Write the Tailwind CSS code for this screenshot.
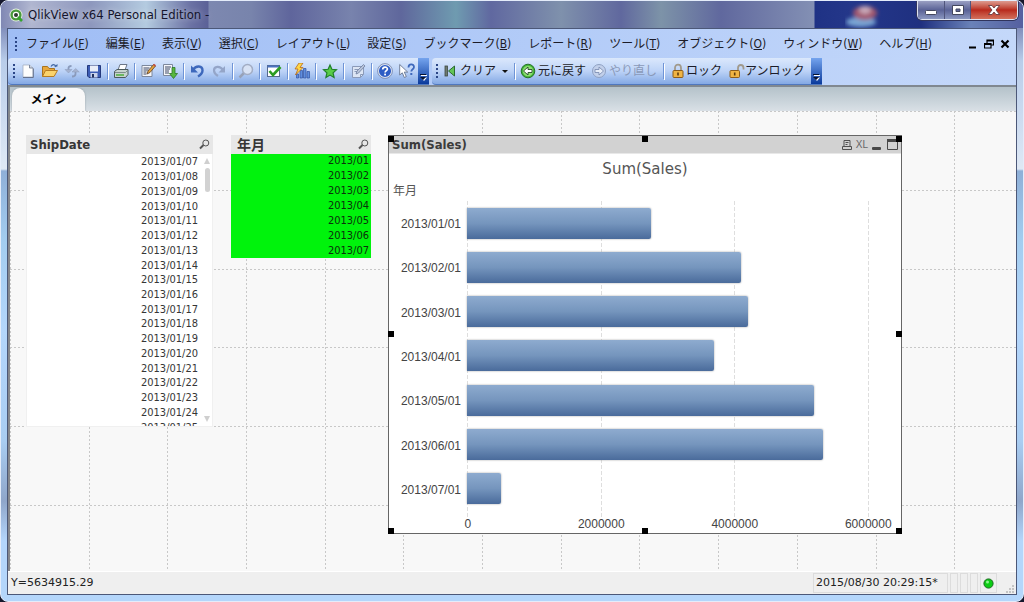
<!DOCTYPE html>
<html lang="ja">
<head>
<meta charset="utf-8">
<title>QlikView x64 Personal Edition</title>
<script src="https://cdn.jsdelivr.net/npm/@tailwindcss/browser@4"></script>
</head>
<body class="h-screen overflow-hidden bg-[#15172c] font-['Noto_Sans','Noto_Sans_CJK_JP',sans-serif] text-xs text-[#1c1c28] select-none">
<div class="flex h-screen flex-col overflow-hidden rounded-lg border border-[#e4ecfa] bg-[linear-gradient(180deg,#6870a8_0,#8390bd_28px,#b9cdea_60px,#d8e4f4_150px,#dfe8f4_168px,#8fb0d8_170px,#a3cdf0_240px,#b4d6fb_330px,#a9cdf2_440px,#8fa6ca_500px,#b4d6fb_540px)] px-[6px] pb-[6px]">

  <header class="-mx-[6px] flex h-[27px] shrink-0 items-start bg-[linear-gradient(90deg,#8088b4_0,#b0b6d0_30px,#8d97bd_90px,#b4cbe0_145px,#6b72a4_190px,#5b6197_207px,#7d88b0_208px,#7884ac_250px,#5f659c_290px,#7883ad_350px,#5f679c_400px,#6f9bb0_455px,#6068a0_490px,#7f91ac_560px,#60689e_620px,#7d93a8_660px,#60689e_720px,#8390b4_813px,#1f3285_814px,#24378a_850px,#1f3080_920px,#6a82b8_970px,#5560a0_100%)]">
    <div class="flex h-[27px] flex-1 items-center gap-[5px] pl-2">
      <svg class="size-[14px]" viewBox="0 0 14 14"><circle cx="7" cy="7" r="6.5" fill="#e8efe6"/><circle cx="7" cy="7" r="4.4" fill="#fff" stroke="#4a9a3c" stroke-width="2.4"/><circle cx="7" cy="7" r="2" fill="#2d3a30"/><path d="M9 9l4 4" stroke="#35a42c" stroke-width="2.6"/></svg>
      <h1 class="pt-px font-['DejaVu_Sans_Condensed','DejaVu_Sans',sans-serif] text-[13px] text-[#15152c] [text-shadow:0_0_6px_#ffffff99]">QlikView x64 Personal Edition -</h1>
    </div>
    <svg class="mr-8 h-[27px] w-10" viewBox="0 0 40 27"><defs><filter id="soft"><feGaussianBlur stdDeviation="2"/></filter></defs><g filter="url(#soft)"><ellipse cx="16" cy="21" rx="15" ry="5" fill="#7aa6d4"/><ellipse cx="20" cy="12" rx="12" ry="7" fill="#a0566e"/><ellipse cx="20" cy="9" rx="6" ry="4" fill="#c8a8b8"/></g></svg>
    <div class="mr-[5px] flex h-[19px] overflow-hidden rounded-b-[5px] border border-t-0 border-[#dfe4f0] shadow-[0_0_0_1px_#30345c]">
      <button aria-label="最小化" class="flex w-[27px] items-center justify-center border-r border-[#50557c] bg-linear-to-b from-[#9a9fc2] via-[#5a6296] via-50% to-[#8c98c0]"><svg class="h-[14px] w-[14px]" viewBox="0 0 14 14"><rect x="1.500" y="7.500" width="11" height="4" rx="1" fill="#fff" stroke="#44485e"/></svg></button>
      <button aria-label="最大化" class="flex w-[26px] items-center justify-center border-r border-[#50557c] bg-linear-to-b from-[#9a9fc2] via-[#5a6296] via-50% to-[#8c98c0]"><svg class="h-[12px] w-[14px]" viewBox="0 0 14 12"><path fill-rule="evenodd" d="M1.500 1.500h11v9h-11zM5 5v2.500h4V5z" fill="#fff" stroke="#44485e"/></svg></button>
      <button aria-label="閉じる" class="flex w-[46px] items-center justify-center bg-linear-to-b from-[#dc9a90] via-[#b8281c] via-50% to-[#d2705c]"><svg class="h-[12px] w-[14px]" viewBox="0 0 14 12"><path d="M1.500 1.500h3.500l2 2.500 2-2.500h3.500L9 6l3.500 4.500H9L7 8l-2 2.500H1.500L5 6z" fill="#fff" stroke="#5a3038" stroke-width=".8"/></svg></button>
    </div>
  </header>

  <main class="flex min-h-0 flex-1 flex-col border border-[#4c5878] bg-[#f8f8f8]">
    <nav class="flex h-[29px] shrink-0 items-center bg-linear-to-r from-[#9fbdf5] to-[#c4d8fa] pl-[7px]" aria-label="メニュー">
      <svg class="mr-[9px] h-4 w-[2px]" viewBox="0 0 2 16"><path d="M1 1v15" stroke="#2b4687" stroke-width="2" stroke-dasharray="2 2"/></svg>
      <div class="flex flex-1 gap-[17px] font-['DejaVu_Sans_Condensed','Noto_Sans_CJK_JP',sans-serif] whitespace-nowrap">
        <button>ファイル(<u>F</u>)</button><button>編集(<u>E</u>)</button><button>表示(<u>V</u>)</button><button>選択(<u>C</u>)</button><button>レイアウト(<u>L</u>)</button><button>設定(<u>S</u>)</button><button>ブックマーク(<u>B</u>)</button><button>レポート(<u>R</u>)</button><button>ツール(<u>T</u>)</button><button>オブジェクト(<u>O</u>)</button><button>ウィンドウ(<u>W</u>)</button><button>ヘルプ(<u>H</u>)</button>
      </div>
      <div class="flex gap-[6px] pr-[6px] text-black">
        <button aria-label="シートを最小化"><svg class="size-[10px]" viewBox="0 0 10 10"><path d="M1 8.500h7" stroke="currentColor" stroke-width="2"/></svg></button>
        <button aria-label="元のサイズに戻す"><svg class="size-[10px]" viewBox="0 0 10 10"><path d="M3 4V1h6.500v5H7M3 2h6.500M.5 4.500H7v4.500H.5zM.5 5.500H7" fill="none" stroke="currentColor" stroke-width="1.200"/></svg></button>
        <button aria-label="シートを閉じる"><svg class="size-[10px]" viewBox="0 0 10 10"><path d="M1.500 1.500l7 7M8.500 1.500l-7 7" stroke="currentColor" stroke-width="2.200"/></svg></button>
      </div>
    </nav>

    <div class="flex h-[27px] shrink-0 bg-linear-to-r from-[#a3c0f6] to-[#c4d8fa]">
      <div class="flex items-center rounded-l-sm border-b border-[#5078be] bg-linear-to-b from-[#dbe8fc] via-[#bdd3f7] to-[#84a9e4] pl-[5px]">
        <svg class="mr-[2px] h-4 w-[2px]" viewBox="0 0 2 16"><path d="M1 1v15" stroke="#2b4687" stroke-width="2" stroke-dasharray="2 2"/></svg>
        <button aria-label="新規" class="flex w-[22px] justify-center"><svg class="size-4" viewBox="0 0 16 16"><path d="M3 2h6.500L13 5v9H3z" fill="#fdfdfd" stroke="#a4aec0" stroke-width=".8"/><path d="M9.500 2v3H13" fill="#cdd4e0" stroke="#66728c" stroke-width=".8"/><path d="M13.300 5.500v9H3" fill="none" stroke="#66728c"/></svg></button>
        <button aria-label="開く" class="flex w-[22px] justify-center"><svg class="size-4" viewBox="0 0 16 16"><path d="M.5 13.500v-10h5l1.500 2h5.500V8" fill="#e8a83c" stroke="#a87420"/><path d="M.5 13.500L3.500 7.500h12L12 13.500z" fill="#fbd36c" stroke="#b67c22"/><path d="M9 3.500c1.500-2.500 4-2.500 5 .5" fill="none" stroke="#4268a6" stroke-width="1.200"/><path d="M12 3.500h3.500V1z" fill="#4268a6"/></svg></button>
        <button aria-label="リロード" class="flex w-[22px] justify-center"><svg class="size-4" viewBox="0 0 16 16" fill="none" stroke="#8a9abb" stroke-width="1.800"><path d="M4.500 8V5c0-1.500 1-2 3-2M11.500 7.500V11c0 1.500-1 2.500-3.500 2.500"/><path d="M1 6.500h7L4.500 10zM8 9h7.300L11.700 5.500z" fill="#a5b2cf" stroke-width=".5"/></svg></button>
        <button aria-label="保存" class="flex w-[22px] justify-center"><svg class="size-4" viewBox="0 0 16 16"><path d="M1.500 2.500h13v12H3l-1.500-1.500z" fill="#3c5cb4" stroke="#24397c"/><rect x="4" y="2.500" width="8" height="6" fill="#e9edf8"/><rect x="4.500" y="10" width="7" height="4.500" fill="#c9d2ea"/><rect x="6" y="11" width="2" height="3.500" fill="#20305e"/></svg></button>
        <span class="mx-[2px] h-4 w-px bg-[#6f94d6] shadow-[1px_1px_0_#fff]"></span>
        <button aria-label="印刷" class="flex w-[22px] justify-center"><svg class="size-4" viewBox="0 0 16 16"><path d="M5 7l2-5.500h7L12 7z" fill="#fff" stroke="#6c7688"/><path d="M1.500 8.500L4 6.500h11v5l-2.500 3h-11z" fill="#c8d4cf" stroke="#4b5a5c"/><path d="M2 9.500h10.500L15 7" stroke="#7d8c8a" fill="none"/><path d="M3 12h8" stroke="#4cae3c" stroke-width="1.500"/></svg></button>
        <span class="mx-[2px] h-4 w-px bg-[#6f94d6] shadow-[1px_1px_0_#fff]"></span>
        <button aria-label="スクリプトの編集" class="flex w-[22px] justify-center"><svg class="size-4" viewBox="0 0 16 16"><path d="M2 2.500h10v11H2z" fill="#f5f6fa" stroke="#7d889c"/><path d="M3.500 5h6M3.500 7h5M3.500 9h3M3.500 11h3" stroke="#3f4b66"/><path d="M7 11l1-3 5.500-6.500L15.500 3 10 9.500z" fill="#e2a33c" stroke="#5e4028" stroke-width=".8"/><path d="M13 2l1-1.200 2 1.500-1 1.200z" fill="#c64a42"/></svg></button>
        <button aria-label="テーブルビューア" class="flex w-[22px] justify-center"><svg class="size-4" viewBox="0 0 16 16"><path d="M1.500 1.500h9v11h-9z" fill="#f5f6fa" stroke="#7d889c"/><path d="M3 4h6M3 6h5M3 8h4M3 10h4" stroke="#3f4b66"/><path d="M10 4.500h3v6h2.500l-4 5-4-5H10z" fill="#58b83e" stroke="#2c7624" stroke-width=".8"/></svg></button>
        <span class="mx-[2px] h-4 w-px bg-[#6f94d6] shadow-[1px_1px_0_#fff]"></span>
        <button aria-label="元に戻す" class="flex w-[22px] justify-center"><svg class="size-4" viewBox="0 0 16 16"><path d="M4 7c3-5 9.500-4.500 9.500.5 0 3-2 4.500-4.500 6" fill="none" stroke="#3d68bc" stroke-width="2.400"/><path d="M2 2.500V9.500h7z" fill="#3d68bc"/></svg></button>
        <button aria-label="やり直し" class="flex w-[22px] justify-center"><svg class="size-4" viewBox="0 0 16 16"><path d="M12 7C9 2.500 3 3 3 7.500c0 2.500 1.500 4 4 5.500" fill="none" stroke="#94a5c8" stroke-width="2.200"/><path d="M14 3v6.500H7.500z" fill="#94a5c8"/></svg></button>
        <span class="mx-[2px] h-4 w-px bg-[#6f94d6] shadow-[1px_1px_0_#fff]"></span>
        <button aria-label="検索" class="flex w-[22px] justify-center"><svg class="size-4" viewBox="0 0 16 16"><path d="M6 10l-4.500 4.500" stroke="#98a2b8" stroke-width="2.500"/><circle cx="9.500" cy="6.500" r="5" fill="#d8e2f4" stroke="#a2adc4" stroke-width="1.500"/></svg></button>
        <span class="mx-[2px] h-4 w-px bg-[#6f94d6] shadow-[1px_1px_0_#fff]"></span>
        <button aria-label="現在の選択" class="flex w-[23px] justify-center"><svg class="size-4" viewBox="0 0 16 16"><rect x="1.500" y="2.500" width="12" height="11" fill="#fff" stroke="#56698e"/><path d="M1.500 3.500h12" stroke="#4a73c0" stroke-width="2"/><path d="M3.500 8l3.500 4 7.500-8" fill="none" stroke="#2c9c22" stroke-width="2.600"/></svg></button>
        <span class="mx-[2px] h-4 w-px bg-[#6f94d6] shadow-[1px_1px_0_#fff]"></span>
        <button aria-label="クイックチャート" class="flex w-[23px] justify-center"><svg class="size-4" viewBox="0 0 16 16"><path d="M2.500 11v4h2v-4zM6 7.500V15h2.500V7.500zM9.500 5.500V15H12V5.500zM13 8.500V15h2.500V8.500z" fill="#5f8ede" stroke="#3052a0" stroke-width=".7"/><path d="M5 0h4L6 4.500h3L1.500 12 4 6H1z" fill="#ffd746" stroke="#b66a1c" stroke-width=".8"/></svg></button>
        <span class="mx-[2px] h-4 w-px bg-[#6f94d6] shadow-[1px_1px_0_#fff]"></span>
        <button aria-label="ブックマークの追加" class="flex w-[23px] justify-center"><svg class="size-4" viewBox="0 0 16 16"><path d="M8 2l1.900 4.300 4.600.5-3.400 3.100 1 4.600L8 12.100l-4.100 2.400 1-4.600L1.500 6.800l4.600-.5z" fill="#58cc48" stroke="#22802a" stroke-width="1.200"/></svg></button>
        <span class="mx-[2px] h-4 w-px bg-[#6f94d6] shadow-[1px_1px_0_#fff]"></span>
        <button aria-label="ノート" class="flex w-[23px] justify-center"><svg class="size-4" viewBox="0 0 16 16"><path d="M2.500 3.500h11v8l-3 3h-8z" fill="#dce5f4" stroke="#8b9ab8"/><path d="M13.500 11.500h-3v3M4.500 6.500h4M4.500 8.500h3" stroke="#8b9ab8" fill="none"/><path d="M6 11l1-3 6.500-6.500 1.500 1.500L8.500 10z" fill="#b9c4da" stroke="#6f7f9f" stroke-width=".8"/></svg></button>
        <span class="mx-[2px] h-4 w-px bg-[#6f94d6] shadow-[1px_1px_0_#fff]"></span>
        <button aria-label="ヘルプ" class="flex w-[22px] justify-center"><svg class="size-4" viewBox="0 0 16 16"><circle cx="8" cy="8" r="6.700" fill="#2d5cc4" stroke="#dfe7f6" stroke-width="1.300"/><circle cx="8" cy="8" r="7.400" fill="none" stroke="#67769c" stroke-width=".7"/><path d="M5.700 6.500C5.700 3.500 10.400 3.500 10.400 6c0 1.600-2.300 1.600-2.300 3.500" fill="none" stroke="#fff" stroke-width="1.700"/><rect x="7.200" y="10.600" width="1.800" height="1.800" fill="#fff"/></svg></button>
        <button aria-label="状況依存のヘルプ" class="flex w-[22px] justify-center"><svg class="size-4" viewBox="0 0 16 16"><path d="M.7 1.500v10.500l2.600-2.200 2 4.700 2-.9-2-4.500h3.400z" fill="#fff" stroke="#68758e" stroke-width=".9"/><path d="M9.500 4.500c0-4 5.500-4 5.500-.5 0 2.200-2.700 2.200-2.700 4.500" fill="none" stroke="#3f69bc" stroke-width="1.800"/><rect x="11.300" y="10" width="2" height="2" fill="#3f69bc"/></svg></button>
        <button aria-label="ツールバー オプション" class="flex h-full w-[11px] items-end justify-center bg-linear-to-b from-[#75a4ee] to-[#0a3a9c] pb-[3px]"><svg class="h-[7px] w-[7px]" viewBox="0 0 7 7"><path d="M1 1h6v1H1zM1 3.500h6l-3 3.500z" fill="#fff"/><path d="M0 0h6v1H0zM0 3h6L3 6z" fill="#071433"/></svg></button>
      </div>
      <div class="ml-[3px] flex items-center rounded-l-sm border-b border-[#5078be] bg-linear-to-b from-[#dbe8fc] via-[#bdd3f7] to-[#84a9e4] pl-[4px] whitespace-nowrap">
        <svg class="mr-[5px] h-4 w-[2px]" viewBox="0 0 2 16"><path d="M1 1v15" stroke="#2b4687" stroke-width="2" stroke-dasharray="2 2"/></svg>
        <button class="flex items-center gap-[3px]"><svg class="h-4 w-[14px]" viewBox="0 0 14 16"><rect x="2" y="3" width="2.500" height="10" fill="#6e7b72" stroke="#3c4840" stroke-width=".8"/><path d="M11.500 3v10L5.500 8z" fill="#62c456" stroke="#2c6a34"/></svg>クリア<svg class="ml-[3px] h-[3px] w-[6px]" viewBox="0 0 6 3"><path d="M0 0h6L3 3z" fill="#111"/></svg></button>
        <span class="mr-[5px] ml-[6px] h-4 w-px bg-[#6f94d6] shadow-[1px_1px_0_#fff]"></span>
        <button class="flex items-center gap-[2px]"><svg class="size-4" viewBox="0 0 16 16"><circle cx="8" cy="8" r="6.800" fill="#42b536" stroke="#277028"/><circle cx="8" cy="8" r="5.200" fill="#8ede72"/><path d="M3.500 8L8 4v2.500h4v3H8V12z" fill="#fff" stroke="#254a28" stroke-width=".9"/></svg>元に戻す</button>
        <button disabled class="ml-[5px] flex items-center gap-[2px] text-[#8a99b8]"><svg class="size-4" viewBox="0 0 16 16"><circle cx="8" cy="8" r="6.500" fill="#c2d0ea" stroke="#8fa0c2"/><path d="M12.500 8L8 4v2.500H4v3h4V12z" fill="#e6edf9" stroke="#7f90b4" stroke-width=".9"/></svg>やり直し</button>
        <span class="mr-[6px] ml-[6px] h-4 w-px bg-[#6f94d6] shadow-[1px_1px_0_#fff]"></span>
        <button class="flex items-center"><svg class="size-4" viewBox="0 0 16 16"><path d="M5 8V5c0-4.500 6-4.500 6 0v3" fill="none" stroke="#a19a8c" stroke-width="1.800"/><rect x="3" y="7.500" width="10" height="7" rx="1" fill="#f0b444" stroke="#8c5c1a"/><path d="M8 9.500v3" stroke="#5c3a10" stroke-width="1.600"/></svg>ロック</button>
        <button class="ml-[7px] flex items-center"><svg class="size-4" viewBox="0 0 16 16"><path d="M9 8V5c0-4 5.500-4 5.500 0v1.500" fill="none" stroke="#a19a8c" stroke-width="1.800"/><rect x="1" y="7.500" width="9.500" height="7" rx="1" fill="#f0b444" stroke="#8c5c1a"/><path d="M5.700 9.500v3" stroke="#5c3a10" stroke-width="1.600"/></svg>アンロック</button>
        <button aria-label="ツールバー オプション" class="ml-[6px] flex h-full w-[11px] items-end justify-center bg-linear-to-b from-[#75a4ee] to-[#0a3a9c] pb-[3px]"><svg class="h-[7px] w-[7px]" viewBox="0 0 7 7"><path d="M1 1h6v1H1zM1 3.500h6l-3 3.500z" fill="#fff"/><path d="M0 0h6v1H0zM0 3h6L3 6z" fill="#071433"/></svg></button>
      </div>
    </div>

    <div class="flex h-[26px] shrink-0 items-end border-t-2 border-l-2 border-[#808890] bg-linear-to-b from-[#b4c2ca] to-[#d9e0e6] pl-[2px]">
      <button class="h-[23px] w-[73px] rounded-t-lg bg-[#f8f8f8] text-xs font-bold text-black shadow-[0_0_2px_#8c989f]">メイン</button>
    </div>

    <section class="relative min-h-0 flex-1 overflow-hidden border-l-2 border-[#85878c] bg-[#f8f8f8]" aria-label="メインシート">
      <svg class="absolute inset-0 h-full w-full" stroke="#c8c8c8" stroke-dasharray="2 2"><path d="M.5 0V470M79.500 0V470M157.500 0V470M236.500 0V470M315.500 0V470M393.500 0V470M472.500 0V470M551.500 0V470M629.500 0V470M708.500 0V470M787.500 0V470M866.500 0V470M944.500 0V470M0 .5H1100M0 79.500H1100M0 158.500H1100M0 236.500H1100M0 315.500H1100M0 394.500H1100"/></svg>

      <article class="absolute top-[24px] left-[16px] w-[187px] bg-[#f0f0f0]">
        <header class="flex h-[19px] items-center justify-between bg-[#e7e7e7] pr-[3px] pl-[4px]">
          <h2 class="font-['DejaVu_Sans_Condensed','DejaVu_Sans',sans-serif] text-[13px] font-bold text-[#363636]">ShipDate</h2>
          <button aria-label="ShipDate を検索"><svg class="size-[11px]" viewBox="0 0 11 11" fill="none" stroke="#555"><circle cx="6.800" cy="4" r="3"/><path d="M4.500 6L1 9.500" stroke-width="2"/></svg></button>
        </header>
        <div class="mx-px mb-px flex h-[272px] overflow-hidden bg-white">
          <ul class="grid h-[281px] flex-1 auto-rows-fr items-center pt-px text-right font-['DejaVu_Sans_Condensed','DejaVu_Sans',sans-serif] text-[11px] leading-[14px] text-[#363636]">
            <li>2013/01/07</li><li>2013/01/08</li><li>2013/01/09</li><li>2013/01/10</li><li>2013/01/11</li><li>2013/01/12</li><li>2013/01/13</li><li>2013/01/14</li><li>2013/01/15</li><li>2013/01/16</li><li>2013/01/17</li><li>2013/01/18</li><li>2013/01/19</li><li>2013/01/20</li><li>2013/01/21</li><li>2013/01/22</li><li>2013/01/23</li><li>2013/01/24</li><li>2013/01/25</li>
          </ul>
          <div class="flex w-[14px] flex-col items-center py-1 pl-[4px]">
            <svg class="h-[6px] w-[6px]" viewBox="0 0 6 6"><path d="M3 0l3 6H0z" fill="#cfcfcf"/></svg>
            <span class="mt-[4px] h-[24px] w-[5px] rounded-full bg-[#d2d2d2]"></span>
            <svg class="mt-auto h-[6px] w-[6px]" viewBox="0 0 6 6"><path d="M3 6l3-6H0z" fill="#cfcfcf"/></svg>
          </div>
        </div>
      </article>

      <article class="absolute top-[24px] left-[221px] w-[140px]">
        <header class="flex h-[19px] items-center justify-between bg-[#e7e7e7] pr-[2px] pl-[6px]">
          <h2 class="text-[14px] leading-[18px] font-bold text-[#363636]">年月</h2>
          <button aria-label="年月 を検索"><svg class="size-[11px]" viewBox="0 0 11 11" fill="none" stroke="#555"><circle cx="6.800" cy="4" r="3"/><path d="M4.500 6L1 9.500" stroke-width="2"/></svg></button>
        </header>
        <ul class="grid h-[104px] auto-rows-fr items-center bg-[#00f30c] pr-[2px] text-right font-['DejaVu_Sans_Condensed','DejaVu_Sans',sans-serif] text-[11px] leading-[14px] text-[#0c300c]">
          <li>2013/01</li><li>2013/02</li><li>2013/03</li><li>2013/04</li><li>2013/05</li><li>2013/06</li><li>2013/07</li>
        </ul>
      </article>

      <article class="absolute top-[24px] left-[378px] flex h-[399px] w-[514px] flex-col border border-[#666] bg-white text-[#555]">
        <header class="flex h-[18px] shrink-0 items-center justify-between border-b border-[#e8e8e8] bg-[#d2d2d2] pr-[3px] pl-[3px]">
          <h2 class="font-['DejaVu_Sans_Condensed','DejaVu_Sans',sans-serif] text-[13px] font-bold text-[#3c3c3c]">Sum(Sales)</h2>
          <div class="flex items-center gap-[4px]">
            <button aria-label="印刷"><svg class="size-[10px]" viewBox="0 0 10 10" fill="none" stroke="#505050"><path d="M2 6.500V.5h6v6M3.500 2.500h3M3.500 4.500h2M.5 6.500h9v3h-9z"/></svg></button>
            <button class="font-['Liberation_Sans',sans-serif] text-[10px] leading-[14px] text-[#666]" aria-label="Excel に出力">XL</button>
            <button aria-label="最小化"><svg class="h-[10px] w-[9px]" viewBox="0 0 9 10"><rect y="7" width="9" height="3" rx="1" fill="#484848"/></svg></button>
            <button class="ml-[2px]" aria-label="最大化"><svg class="size-[11px]" viewBox="0 0 11 11" fill="none" stroke="#484848"><path d="M.5 1v9.500h10V1"/><path d="M0 1.500h11" stroke-width="3"/></svg></button>
          </div>
        </header>
        <h3 class="mt-[5px] text-center font-['DejaVu_Sans',sans-serif] text-[15px] leading-[20px]">Sum(Sales)</h3>
        <p class="mt-[4px] pl-[4px] text-[12px] leading-4">年月</p>
        <div class="relative mt-[2px] ml-[78px] h-[310px] w-[401px]">
          <svg class="absolute inset-0 h-[318px] w-full overflow-visible" stroke="#dedede" stroke-dasharray="4 2"><path d="M.5 0V316M134.500 0V316M267.500 0V316M401.500 0V316"/></svg>
          <ul class="relative -ml-[78px] grid h-full auto-rows-fr font-['Liberation_Sans',sans-serif] text-[12px] text-[#444]">
            <li class="flex items-center"><span class="w-[72px] pt-[2px] text-right">2013/01/01</span><span class="ml-[6px] h-[31px] rounded-r-[2px] bg-linear-to-b from-[#8eabcf] via-[#7595bd] to-[#4a6b9b] shadow-[0_0_2px_#999]" style="width:184px"></span></li>
            <li class="flex items-center"><span class="w-[72px] pt-[2px] text-right">2013/02/01</span><span class="ml-[6px] h-[31px] rounded-r-[2px] bg-linear-to-b from-[#8eabcf] via-[#7595bd] to-[#4a6b9b] shadow-[0_0_2px_#999]" style="width:274px"></span></li>
            <li class="flex items-center"><span class="w-[72px] pt-[2px] text-right">2013/03/01</span><span class="ml-[6px] h-[31px] rounded-r-[2px] bg-linear-to-b from-[#8eabcf] via-[#7595bd] to-[#4a6b9b] shadow-[0_0_2px_#999]" style="width:281px"></span></li>
            <li class="flex items-center"><span class="w-[72px] pt-[2px] text-right">2013/04/01</span><span class="ml-[6px] h-[31px] rounded-r-[2px] bg-linear-to-b from-[#8eabcf] via-[#7595bd] to-[#4a6b9b] shadow-[0_0_2px_#999]" style="width:247px"></span></li>
            <li class="flex items-center"><span class="w-[72px] pt-[2px] text-right">2013/05/01</span><span class="ml-[6px] h-[31px] rounded-r-[2px] bg-linear-to-b from-[#8eabcf] via-[#7595bd] to-[#4a6b9b] shadow-[0_0_2px_#999]" style="width:347px"></span></li>
            <li class="flex items-center"><span class="w-[72px] pt-[2px] text-right">2013/06/01</span><span class="ml-[6px] h-[31px] rounded-r-[2px] bg-linear-to-b from-[#8eabcf] via-[#7595bd] to-[#4a6b9b] shadow-[0_0_2px_#999]" style="width:356px"></span></li>
            <li class="flex items-center"><span class="w-[72px] pt-[2px] text-right">2013/07/01</span><span class="ml-[6px] h-[31px] rounded-r-[2px] bg-linear-to-b from-[#8eabcf] via-[#7595bd] to-[#4a6b9b] shadow-[0_0_2px_#999]" style="width:34px"></span></li>
          </ul>
        </div>
        <div class="mt-[5px] ml-[12px] grid w-[534px] grid-cols-4 text-center font-['Liberation_Sans',sans-serif] text-[12px] leading-4 text-[#444]"><span>0</span><span>2000000</span><span>4000000</span><span>6000000</span></div>
        <i class="absolute top-0 -left-px size-[6px] bg-black"></i><i class="absolute top-0 left-[253px] size-[6px] bg-black"></i><i class="absolute top-0 -right-px size-[6px] bg-black"></i>
        <i class="absolute top-[195px] -left-px size-[6px] bg-black"></i><i class="absolute top-[195px] -right-px size-[6px] bg-black"></i>
        <i class="absolute -bottom-px -left-px size-[6px] bg-black"></i><i class="absolute -bottom-px left-[253px] size-[6px] bg-black"></i><i class="absolute -right-px -bottom-px size-[6px] bg-black"></i>
      </article>
    </section>

    <footer class="flex h-[23px] shrink-0 items-center border-t border-white bg-[#efefef] pr-[1px] pl-[3px] font-['DejaVu_Sans',sans-serif] text-[11px] text-[#222]">
      <span class="flex-1">Y=5634915.29</span>
      <span class="flex h-5 w-[135px] items-center border border-[#dcdcdc] pl-[2px] whitespace-nowrap">2015/08/30 20:29:15*</span>
      <span class="ml-[2px] h-5 w-2 border border-[#dcdcdc]"></span><span class="ml-[2px] h-5 w-2 border border-[#dcdcdc]"></span><span class="ml-[2px] h-5 w-2 border border-[#dcdcdc]"></span>
      <span class="ml-[2px] flex h-5 w-[17px] items-center justify-center border border-[#dcdcdc]"><svg class="size-[11px]" viewBox="0 0 11 11"><circle cx="5.500" cy="5.500" r="4.600" fill="#0ccc14" stroke="#1a6a1e"/><circle cx="4.500" cy="4" r="1.500" fill="#8cf48c"/></svg></span>
      <svg class="ml-[9px] size-[9px] self-end" viewBox="0 0 9 9" fill="#c4c4c4"><path d="M6 0h2v2H6zM3 3h2v2H3zM6 3h2v2H6zM0 6h2v2H0zM3 6h2v2H3zM6 6h2v2H6z"/></svg>
    </footer>
  </main>
</div>
</body>
</html>
